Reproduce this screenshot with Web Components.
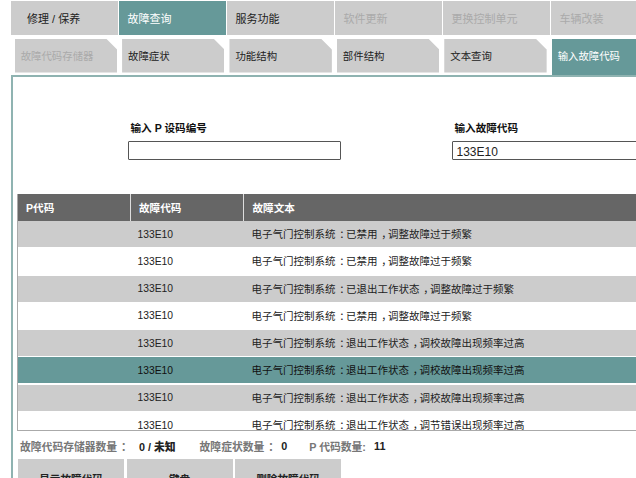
<!DOCTYPE html>
<html lang="zh">
<head>
<meta charset="utf-8">
<title>故障查询</title>
<style>
  html, body { margin:0; height:478px; overflow:hidden; background:#fff; }
  body { font-family:"Liberation Sans","Noto Sans CJK SC",sans-serif; color:#222; }
</style>
</head>
<body>
<dg-tabs>
  <dg-tab>修理 / 保养</dg-tab>
  <dg-tab active>故障查询</dg-tab>
  <dg-tab>服务功能</dg-tab>
  <dg-tab disabled>软件更新</dg-tab>
  <dg-tab disabled>更换控制单元</dg-tab>
  <dg-tab disabled>车辆改装</dg-tab>
</dg-tabs>
<dg-subtabs>
  <dg-subtab disabled>故障代码存储器</dg-subtab>
  <dg-subtab>故障症状</dg-subtab>
  <dg-subtab>功能结构</dg-subtab>
  <dg-subtab>部件结构</dg-subtab>
  <dg-subtab>文本查询</dg-subtab>
  <dg-subtab active>输入故障代码</dg-subtab>
</dg-subtabs>
<dg-panel>
  <dg-search>
    <dg-field label="输入 P 设码编号"></dg-field>
    <dg-field label="输入故障代码" value="133E10"></dg-field>
  </dg-search>
  <dg-table>
    <dg-row code="133E10" text="电子气门控制系统：已禁用，调整故障过于频繁" shade></dg-row>
    <dg-row code="133E10" text="电子气门控制系统：已禁用，调整故障过于频繁"></dg-row>
    <dg-row code="133E10" text="电子气门控制系统：已退出工作状态，调整故障过于频繁" shade></dg-row>
    <dg-row code="133E10" text="电子气门控制系统：已禁用，调整故障过于频繁"></dg-row>
    <dg-row code="133E10" text="电子气门控制系统：退出工作状态，调校故障出现频率过高" shade></dg-row>
    <dg-row code="133E10" text="电子气门控制系统：退出工作状态，调校故障出现频率过高" selected></dg-row>
    <dg-row code="133E10" text="电子气门控制系统：退出工作状态，调校故障出现频率过高" shade></dg-row>
    <dg-row code="133E10" text="电子气门控制系统：退出工作状态，调节错误出现频率过高"></dg-row>
  </dg-table>
  <dg-status></dg-status>
  <dg-actions>
    <dg-button>显示故障代码</dg-button>
    <dg-button>键盘</dg-button>
    <dg-button>删除故障代码</dg-button>
  </dg-actions>
</dg-panel>
<script>
// small helper so each element only has to give its css and markup
class Base extends HTMLElement {
  constructor(){ super(); this.attachShadow({ mode:'open' }); }
  connectedCallback(){ this.shadowRoot.innerHTML = `<style>${this.css()}</style>${this.html()}`; }
  css(){ return ''; }
  html(){ return '<slot></slot>'; }
}

// the reference centres its full-width punctuation in the cell, the SC glyphs sit left
const punct = s => s.replace(/[：，]/g, c => `<span class="p">${c}</span>`);
const punctCss = `.p { margin-left:.36em; letter-spacing:-.36em; }`;

class DgTabs extends Base {
  css(){ return `:host { display:grid; grid-template-columns:repeat(6,106.5px); column-gap:1.5px; padding:1px 0 0 11px; height:34px; width:660px; }`; }
}

class DgTab extends Base {
  css(){ return `
    :host { display:flex; align-items:center; padding-left:8.5px; background:#ccc; font-size:11px; color:#222; white-space:nowrap; }
    :host(:first-child) { padding-left:16px; }
    :host([active]) { background:#669999; color:#fff; }
    :host([disabled]) { color:#aaa; }`; }
}

class DgSubtabs extends Base {
  css(){ return `:host { display:grid; grid-template-columns:repeat(6,102.4px); column-gap:5px; padding:3.5px 0 0 14.7px; height:36.5px; width:660px; }`; }
}

class DgSubtab extends Base {
  css(){ return `
    :host { display:flex; align-items:center; box-sizing:border-box; height:34px; padding-left:6px; background:#ccc; font-size:10.4px; color:#222; white-space:nowrap;
      clip-path:polygon(0 0,calc(100% - 11px) 0,100% 11px,100% 100%,0 100%); }
    :host([active]) { background:#669999; color:#fff; height:36.5px; clip-path:none; padding-bottom:2.5px; }
    :host([disabled]) { color:#aaa; }`; }
}

class DgPanel extends Base {
  css(){ return `:host { display:block; box-sizing:border-box; width:660px; height:403px; margin-left:11px; border:solid #8fb3b1; border-width:2px 0 0 2px; padding-left:3.5px; overflow:hidden; }`; }
}

class DgSearch extends Base {
  css(){ return `:host { display:grid; grid-template-columns:213px 200px; column-gap:111px; padding:44px 0 0 111px; height:73px; }`; }
}

class DgField extends Base {
  css(){ return `
    :host { display:flex; flex-direction:column; }
    label { font-size:10.6px; font-weight:bold; color:#111; padding-left:3px; height:14px; line-height:14px; margin-bottom:6px; white-space:nowrap; }
    .box { box-sizing:border-box; height:19px; border:1px solid #555; border-radius:1px; font-size:12px; line-height:21px; padding-left:4px; color:#222; background:#fff; }`; }
  html(){ return `<label>${this.getAttribute('label')}</label><div class="box">${this.getAttribute('value') || ''}</div>`; }
}

class DgTable extends Base {
  css(){ return `
    :host { display:block; box-sizing:border-box; width:640px; height:236.5px; overflow:hidden; border-left:1.5px solid #aaa; border-bottom:1.5px solid #aaa; }
    .head { display:grid; grid-template-columns:113px 113.5px 1fr; height:26.5px; margin-bottom:.5px; background:#666; }
    .head div { display:flex; align-items:center; padding-left:8.5px; font-size:10.6px; font-weight:bold; color:#fff; border-right:1.5px solid #ddd; white-space:nowrap; }
    .head div:last-child { border:0; }`; }
  html(){ return `<div class="head"><div>P代码</div><div>故障代码</div><div>故障文本</div></div><slot></slot>`; }
}

class DgRow extends Base {
  css(){ return `
    :host { display:grid; grid-template-columns:113px 113.5px 1fr; height:26px; margin-bottom:1.3px; align-items:center; font-size:10.3px; color:#222; white-space:nowrap; }
    :host([shade]) { background:#ccc; }
    :host([selected]) { background:#669999; color:#111; }
    div { padding-left:7px; }
    .t { font-size:10.5px; padding-left:7.5px; padding-bottom:1px; }
    ${punctCss}`; }
  html(){ return `<div></div><div>${this.getAttribute('code')}</div><div class="t">${punct(this.getAttribute('text'))}</div>`; }
}

class DgStatus extends Base {
  css(){ return `
    :host { display:flex; align-items:center; height:26px; margin-top:.5px; padding:2px 0 0 3.5px; font-size:10.8px; font-weight:bold; color:#777; white-space:nowrap; }
    b { color:#222; }
    ${punctCss}`; }
  html(){ return `<span>${punct('故障代码存储器数量：')}</span><b style="margin-left:11px">0 / 未知</b><span style="margin-left:24px">${punct('故障症状数量：')}</span><b style="margin-left:6px">0</b><span style="margin-left:22px">P 代码数量:</span><b style="margin-left:8px">11</b>`; }
}

class DgActions extends Base {
  css(){ return `:host { display:grid; grid-template-columns:repeat(3,106px); column-gap:2.5px; padding-left:1.5px; }`; }
}

class DgButton extends Base {
  css(){ return `:host { display:flex; justify-content:center; align-items:center; height:38px; background:#ccc; font-size:10.6px; font-weight:bold; color:#222; }`; }
}

customElements.define('dg-tabs', DgTabs);
customElements.define('dg-tab', DgTab);
customElements.define('dg-subtabs', DgSubtabs);
customElements.define('dg-subtab', DgSubtab);
customElements.define('dg-panel', DgPanel);
customElements.define('dg-search', DgSearch);
customElements.define('dg-field', DgField);
customElements.define('dg-table', DgTable);
customElements.define('dg-row', DgRow);
customElements.define('dg-status', DgStatus);
customElements.define('dg-actions', DgActions);
customElements.define('dg-button', DgButton);
</script>
</body>
</html>
